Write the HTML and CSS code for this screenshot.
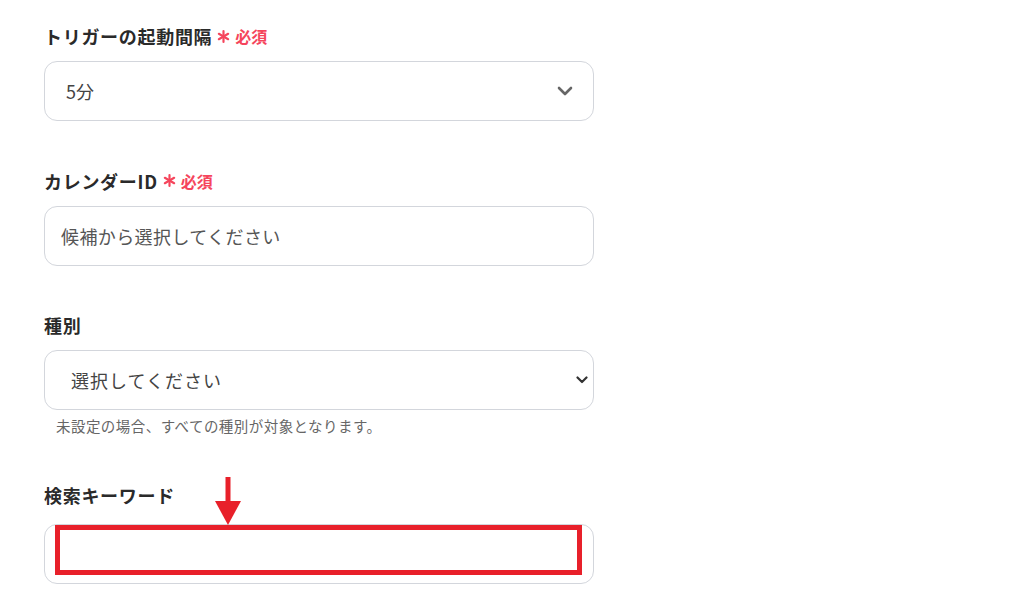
FILE: index.html
```html
<!DOCTYPE html>
<html lang="ja">
<head>
<meta charset="utf-8">
<link rel="stylesheet" href="styles.css">
</head>
<body>
<main class="form">
  <div class="field">
    <div class="label">トリガーの起動間隔<span class="req"><svg class="ast" viewBox="0 0 12 12" width="13" height="13"><g stroke="currentColor" stroke-width="2" stroke-linecap="round"><line x1="6" y1="1" x2="6" y2="11"/><line x1="1.7" y1="3.5" x2="10.3" y2="8.5"/><line x1="1.7" y1="8.5" x2="10.3" y2="3.5"/></g></svg>必須</span></div>
    <div class="box select">
      <span class="value">5分</span>
      <svg class="chev" viewBox="0 0 16 10" width="16" height="10"><polyline points="2,2 8,8 14,2" fill="none" stroke="#666" stroke-width="2.6" stroke-linecap="round" stroke-linejoin="round"/></svg>
    </div>
  </div>

  <div class="field">
    <div class="label">カレンダーID<span class="req"><svg class="ast" viewBox="0 0 12 12" width="13" height="13"><g stroke="currentColor" stroke-width="2" stroke-linecap="round"><line x1="6" y1="1" x2="6" y2="11"/><line x1="1.7" y1="3.5" x2="10.3" y2="8.5"/><line x1="1.7" y1="8.5" x2="10.3" y2="3.5"/></g></svg>必須</span></div>
    <div class="box">
      <span class="placeholder">候補から選択してください</span>
    </div>
  </div>

  <div class="field">
    <div class="label">種別</div>
    <div class="box select native">
      <span class="value">選択してください</span>
      <svg class="chev small" viewBox="0 0 12 8" width="12" height="8"><polyline points="1.5,1.5 6,6 10.5,1.5" fill="none" stroke="#333" stroke-width="2.2" stroke-linecap="round" stroke-linejoin="round"/></svg>
    </div>
    <p class="help">未設定の場合、すべての種別が対象となります。</p>
  </div>

  <div class="field keyword">
    <div class="label">検索キーワード</div>
    <div class="box">
      <div class="highlight"></div>
    </div>
    <svg class="arrow" viewBox="0 0 26 48" width="26" height="48"><rect x="10.5" y="0" width="5" height="26" fill="#e8202a"/><polygon points="0,24 26,24 13,48" fill="#e8202a"/></svg>
  </div>
</main>
</body>
</html>
```

FILE: styles.css
```css
* { box-sizing: border-box; }
html, body { margin: 0; padding: 0; background: #fff; }
body {
  font-family: "Noto Sans CJK JP", "Noto Sans", sans-serif;
  color: #2a2a2a;
}
.form {
  width: 550px;
  margin-left: 44px;
  padding-top: 23px;
  display: flex;
  flex-direction: column;
  gap: 46.5px;
}
.field { position: relative; display: flex; flex-direction: column; }
.label {
  font-size: 18px;
  font-weight: 700;
  line-height: 26px;
  height: 26px;
  letter-spacing: 0.7px;
  margin-bottom: 12px;
  display: flex;
  align-items: center;
  color: #2a2a2a;
}
.req {
  display: inline-flex;
  align-items: center;
  color: #f5455c;
  font-size: 16px;
  font-weight: 700;
  margin-left: 5px;
  letter-spacing: 0;
}
.ast { margin-right: 5px; }
.box {
  position: relative;
  height: 60px;
  border: 1px solid #d3d6dc;
  border-radius: 13px;
  display: flex;
  align-items: center;
  padding: 0 20px 0 16px;
  font-size: 18px;
  background: #fff;
}
.value { color: #444; padding-left: 5px; }
.placeholder { color: #555; letter-spacing: 0.4px; }
.select { justify-content: space-between; }
.native { padding: 0 5px 0 26px; }
.native .value { padding-left: 0; letter-spacing: 1px; }
.help {
  margin: 7px 0 0 12px;
  font-size: 14.5px;
  line-height: 18px;
  color: #666;
  letter-spacing: 0.45px;
}
.keyword .label { margin-bottom: 16px; }
.highlight {
  position: absolute;
  left: 10px;
  top: 0;
  width: 527px;
  height: 50px;
  border: 5px solid #e8202a;
}
.arrow {
  position: absolute;
  left: 171px;
  top: -5px;
}
```
